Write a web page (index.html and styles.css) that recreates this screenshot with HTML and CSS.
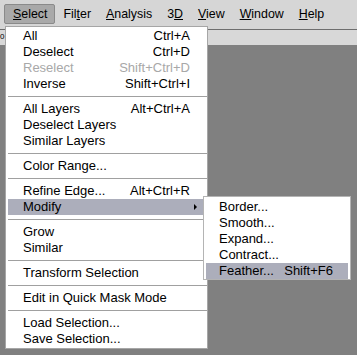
FILE: index.html
```html
<!DOCTYPE html>
<html lang="en">
  <head>
    <meta charset="UTF-8" />
    <title>Select Menu</title>
    <link rel="stylesheet" href="styles.css">
  </head>
  <body>
    <div id="app">
      <div class="menubar">
        <span class="menubar-item active"><u>S</u>elect</span>
        <span class="menubar-item">Fil<u>t</u>er</span>
        <span class="menubar-item"><u>A</u>nalysis</span>
        <span class="menubar-item">3<u>D</u></span>
        <span class="menubar-item"><u>V</u>iew</span>
        <span class="menubar-item"><u>W</u>indow</span>
        <span class="menubar-item"><u>H</u>elp</span>
        <span class="menubar-sep"></span>
        <span class="menubar-btn"></span>
      </div>
      <div class="optionsbar"><span class="cut">0</span></div>
      <div class="workspace"></div>

      <div class="menu dropdown">
        <div class="menu-row"><span>All</span><span>Ctrl+A</span></div>
        <div class="menu-row"><span>Deselect</span><span>Ctrl+D</span></div>
        <div class="menu-row disabled"><span>Reselect</span><span>Shift+Ctrl+D</span></div>
        <div class="menu-row"><span>Inverse</span><span>Shift+Ctrl+I</span></div>
        <div class="menu-sep"></div>
        <div class="menu-row"><span>All Layers</span><span>Alt+Ctrl+A</span></div>
        <div class="menu-row"><span>Deselect Layers</span></div>
        <div class="menu-row"><span>Similar Layers</span></div>
        <div class="menu-sep"></div>
        <div class="menu-row"><span>Color Range...</span></div>
        <div class="menu-sep"></div>
        <div class="menu-row"><span>Refine Edge...</span><span>Alt+Ctrl+R</span></div>
        <div class="menu-row hover has-sub">
          <span>Modify</span><span class="arrow"></span>
          <div class="menu submenu">
            <div class="menu-row"><span>Border...</span></div>
            <div class="menu-row"><span>Smooth...</span></div>
            <div class="menu-row"><span>Expand...</span></div>
            <div class="menu-row"><span>Contract...</span></div>
            <div class="menu-row hover"><span>Feather...</span><span>Shift+F6</span></div>
          </div>
        </div>
        <div class="menu-sep"></div>
        <div class="menu-row"><span>Grow</span></div>
        <div class="menu-row"><span>Similar</span></div>
        <div class="menu-sep"></div>
        <div class="menu-row"><span>Transform Selection</span></div>
        <div class="menu-sep"></div>
        <div class="menu-row"><span>Edit in Quick Mask Mode</span></div>
        <div class="menu-sep"></div>
        <div class="menu-row"><span>Load Selection...</span></div>
        <div class="menu-row"><span>Save Selection...</span></div>
      </div>
    </div>
  </body>
</html>
```
FILE: styles.css
```css
* {
  box-sizing: border-box;
  margin: 0;
  padding: 0;
}
body {
  width: 357px;
  height: 355px;
  overflow: hidden;
  background-color: #808080;
  font-family: "Liberation Sans", Arial, sans-serif;
  font-size: 13px;
  color: #000000;
}
u {
  text-decoration: underline;
  text-underline-offset: 1px;
}

#app {
  position: relative;
  height: 100%;
  display: flex;
  flex-direction: column;
}

.menubar {
  height: 30px;
  display: flex;
  align-items: center;
  padding: 0 0 1px 4px;
  background-color: #d6d6d6;
  border-bottom: 1px solid #6e6e6e;
}
.menubar-item {
  height: 20px;
  line-height: 18px;
  padding: 0 6px 0 7px;
  font-size: 12.4px;
  border: 1px solid transparent;
  border-radius: 2px;
}
.menubar-item.active {
  padding: 0 7px 0 8px;
  background-color: #a9a9a9;
  border-color: #8a8a8a;
}
.menubar-sep {
  width: 1px;
  height: 18px;
  margin-left: 12px;
  background-color: #9a9a9a;
}
.menubar-btn {
  width: 10px;
  height: 16px;
  margin-left: 14px;
  border: 1px solid #555555;
  border-right: none;
  background-color: #e4e4e4;
}

.optionsbar {
  height: 15px;
  background-color: #d8d8d8;
  overflow: hidden;
  position: relative;
}
.optionsbar .cut {
  position: absolute;
  left: 0;
  top: 2px;
  font-size: 8px;
  line-height: 10px;
}
.workspace {
  flex: 1;
  background-color: #808080;
}

/* dropdown menus */
.menu {
  position: absolute;
  background-color: #ffffff;
  border: 1px solid #a6a6a6;
  padding: 1px 2px 1px 2px;
}
.dropdown {
  left: 5px;
  top: 26px;
  width: 203px;
}
.menu-row {
  position: relative;
  height: 16px;
  line-height: 16px;
  display: flex;
  justify-content: space-between;
  padding: 0 15px 0 15px;
  white-space: nowrap;
}
.menu-row.disabled {
  color: #a8a8a8;
}
.menu-row.hover {
  background-color: #acaebb;
}
.menu-sep {
  height: 9px;
  position: relative;
}
.menu-sep::after {
  content: "";
  position: absolute;
  left: 0;
  right: -2px;
  top: 4px;
  height: 1px;
  background-color: #a0a0a0;
}
.arrow {
  width: 0;
  height: 0;
  margin: 5px -7px 0 0;
  border-top: 3px solid transparent;
  border-bottom: 3px solid transparent;
  border-left: 3px solid #000000;
}

.submenu {
  left: 195px;
  top: -3px;
  width: 148px;
  padding: 2px 2px 0 2px;
  border-color: #b4b4b4;
  z-index: 2;
}
.submenu .menu-row {
  padding: 0 15px 0 13px;
}
```
